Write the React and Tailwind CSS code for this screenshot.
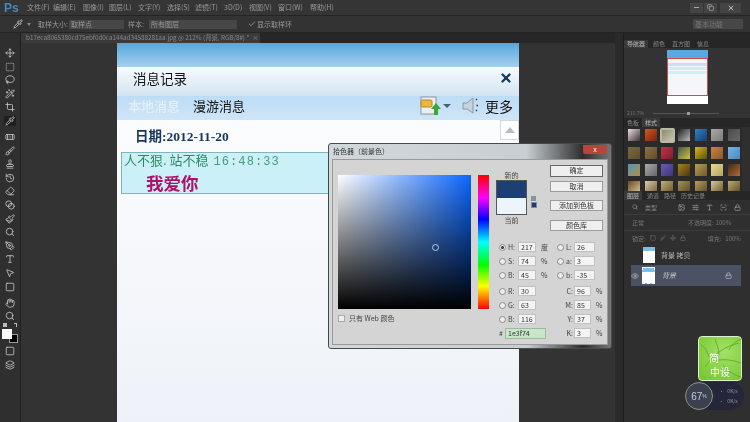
import React from "react";
import { Move, SquareDashed, Lasso, Wand2, Crop, Pipette, Bandage, Brush, Stamp, History, Eraser, Blend, Hand, Search, Type, MousePointer2, PenTool, Square, Layers, Image, Lock, Eye, Minus, Copy, X, Check, SlidersHorizontal, ScanLine, Paintbrush, Move as MoveIcon } from "lucide-react";

const CJK = { fontFamily: '"Noto Sans CJK SC","Noto Sans",sans-serif' };

const menus = ["文件(F)", "编辑(E)", "图像(I)", "图层(L)", "文字(Y)", "选择(S)", "滤镜(T)", "3D(D)", "视图(V)", "窗口(W)", "帮助(H)"];
const menuGaps = ["w-[26px]", "w-[30px]", "w-[26px]", "w-[29px]", "w-[29px]", "w-[28px]", "w-[29px]", "w-[25px]", "w-[29px]", "w-[32px]", "w-[32px]"];

const tools = [
  [Move, "mt-[0px]"], [SquareDashed, "mt-[3.6px]"], [Lasso, "mt-[3.6px]"], [Wand2, "mt-[3.6px]"], [Crop, "mt-[3.6px]"], [Pipette, "mt-[3.6px]"],
  [Bandage, "mt-[6px]"], [Brush, "mt-[3.6px]"], [Stamp, "mt-[3.6px]"], [History, "mt-[3.6px]"], [Eraser, "mt-[3.6px]"], [Blend, "mt-[3.6px]"],
  [Paintbrush, "mt-[3.6px]"], [Search, "mt-[3.6px]"], [PenTool, "mt-[3.6px]"], [Type, "mt-[3.6px]"], [MousePointer2, "mt-[3.6px]"], [Square, "mt-[3.6px]"],
  [Hand, "mt-[6px]"], [Search, "mt-[3px]"],
];

const styles = [
  ["#e8e0e0", "#40303a"], ["#d9541c", "#6b2a10"], ["#8a8a72", "#c9c9b0"], ["#222", "#bbb"], ["#2f80c8", "#16406d"], ["#a7a7a7", "#7d7d7d"], ["#4a4a4a", "#6a6a6a"],
  ["#7b6a3c", "#5e5030"], ["#8d7340", "#5e4d2c"], ["#c5334c", "#7d1c2c"], ["#3d5a4a", "#d8c040"], ["#d4b818", "#5e500c"], ["#c78544", "#8a5730"], ["#76b4e4", "#4d88bd"],
  ["#5a90c0", "#b09040"], ["#aaa", "#666"], ["#6a5cb4", "#3e3478"], ["#a9821f", "#4a3610"], ["#b99c58", "#705a28"], ["#e8d898", "#b8a260"], ["#3a2c1c", "#b86a30"],
  ["#6a4a22", "#d8c498"], ["#d8ceb0", "#7a5e30"], ["#c0ae80", "#6a5428"], ["#a8925a", "#5a4820"], ["#b89e60", "#5a4820"], ["#d8c8a0", "#6a5428"], ["#c0ae70", "#5a4820"],
];

function Swatch({ a, b, idx }) {
  return (
    <div className={idx === 2 ? "w-[15px] h-[15px] rounded-[2px] border-2 border-[#b9b9a4]" : "w-[12px] h-[12px] mx-[1px] my-[1px]"} style={{ background: `linear-gradient(135deg, ${a}, ${b})` }} />
  );
}

function Radio({ on }) {
  return <span className="w-[7px] h-[7px] rounded-full bg-[#eeeeee] border border-[#8a8a8a] flex items-center justify-center shrink-0">{on && <span className="w-[3px] h-[3px] rounded-full bg-[#333]" />}</span>;
}

function Field({ radio, on, label, value, w, unit, labelW }) {
  return (
    <div className="flex items-center">
      {radio && <Radio on={on} />}
      <span className={`${labelW} text-[7px] text-[#444] ml-[2px]`}>{label}</span>
      <span className={`${w} h-[10px] bg-[#f4f4f4] border border-[#c0c0c0] text-[7px] leading-[8px] pl-[2px] text-[#333]`}>{value}</span>
      {unit && <span className="ml-[5px] text-[7px] text-[#444]">{unit}</span>}
    </div>
  );
}

function Btn({ children, cls }) {
  return <div className={`w-[53px] h-[11px] bg-[#efefef] border border-[#9c9c9c] text-[7px] leading-[9px] text-center text-[#333] ${cls}`}>{children}</div>;
}

function Dialog() {
  const rows = [
    [{ radio: true, on: true, label: "H:", value: "217", unit: "度" }, { radio: true, label: "L:", value: "26" }],
    [{ radio: true, label: "S:", value: "74", unit: "%" }, { radio: true, label: "a:", value: "3" }],
    [{ radio: true, label: "B:", value: "45", unit: "%" }, { radio: true, label: "b:", value: "-35" }],
    [{ radio: true, label: "R:", value: "30" }, { label: "C:", value: "96", unit: "%" }],
    [{ radio: true, label: "G:", value: "63" }, { label: "M:", value: "85", unit: "%" }],
    [{ radio: true, label: "B:", value: "116" }, { label: "Y:", value: "37", unit: "%" }],
  ];
  return (
    <div className="absolute left-[328px] top-[143px] w-[284px] h-[206px] rounded-[3px] border border-[#4a4a4a] bg-[linear-gradient(90deg,#d0d8dc_0%,#c6cfd2_70%,#2e2e2e_90%,#777_100%)] px-[3px] pb-[3px] flex flex-col" style={CJK}>
      <div className="h-[15px] flex items-center justify-between shrink-0">
        <span className="text-[7px] text-[#333] ml-[1px]">拾色器（前景色）</span>
        <span className="w-[24px] h-[9px] bg-[#b8443c] rounded-b-[2px] text-white text-[7px] leading-[9px] text-center mr-[1px] -mt-[5px]">x</span>
      </div>
      <div className="flex-1 bg-[#d4d4d4] border border-[#9a9a9a] flex">
        <div className="ml-[5px] mt-[15px] w-[151px] shrink-0">
          <div className="flex gap-[7px]">
            <div className="w-[133px] h-[134px] bg-[linear-gradient(to_top,#000,transparent),linear-gradient(to_right,#fff,#0a66ff)] relative">
              <span className="absolute left-[94px] top-[69px] w-[7px] h-[7px] rounded-full border border-[#b8cbe2]" />
            </div>
            <div className="w-[11px] h-[134px] bg-[linear-gradient(to_bottom,#ff0000,#ff00ff_17%,#0000ff_33%,#00ffff_50%,#00ff00_67%,#ffff00_83%,#ff0000)]" />
          </div>
          <div className="flex items-center mt-[4px] text-[7px] text-[#444]">
            <span className="w-[7px] h-[7px] bg-[#eee] border border-[#aaa] mr-[4px]" />只有 Web 颜色
          </div>
        </div>
        <div className="ml-[7px] flex-1 flex flex-col">
          <div className="flex h-[80px] shrink-0">
            <div className="w-[31px] mt-[11px] shrink-0 text-center text-[7px] text-[#444] leading-[9px]">
              <div>新的</div>
              <div className="h-[35px] border border-[#555] flex flex-col">
                <div className="flex-1 bg-[#1e3f74]" />
                <div className="flex-1 bg-[#eef4fb]" />
              </div>
              <div className="mt-[1px]">当前</div>
            </div>
            <div className="w-[7px] ml-[4px] mt-[36px] flex flex-col gap-[1px] shrink-0">
              <span className="w-[5px] h-[5px] bg-[#8a93a0]" />
              <span className="w-[6px] h-[6px] bg-[#1e3f74] border border-[#889]" />
            </div>
            <div className="ml-[12px] mt-[5px] flex flex-col shrink-0">
              <Btn cls="h-[12px] border-[#666]">确定</Btn>
              <Btn cls="mt-[4px]">取消</Btn>
              <Btn cls="mt-[8px]">添加到色板</Btn>
              <Btn cls="mt-[9px]">颜色库</Btn>
            </div>
          </div>
          <div className="flex flex-col">
            {rows.map((r, i) => (
              <div key={i} className={`flex h-[14px] items-center ${i === 3 ? "mt-[2px]" : ""}`}>
                <div className="w-[58px] ml-[3px] shrink-0"><Field {...r[0]} labelW="w-[10px]" w="w-[18px]" /></div>
                <div className="shrink-0">
                  {r[1].radio ? <Field {...r[1]} labelW="w-[8px]" w="w-[21px]" /> : <Field {...r[1]} labelW="w-[15px] text-right pr-[1px]" w="w-[17px]" />}
                </div>
              </div>
            ))}
            <div className="flex h-[14px] items-center">
              <div className="w-[58px] ml-[3px] shrink-0 flex items-center text-[7px] text-[#444]">
                <span className="w-[6px]">#</span>
                <span className="w-[41px] h-[11px] bg-[#c8e6c9] border border-[#a0b8a0] pl-[2px] leading-[9px] text-[#333]">1e3f74</span>
              </div>
              <Field label="K:" value="3" unit="%" labelW="w-[15px] text-right pr-[1px]" w="w-[17px]" />
            </div>
          </div>
        </div>
      </div>
    </div>
  );
}

function Doc() {
  return (
    <div className="ml-[96px] w-[402px] h-full bg-[linear-gradient(to_bottom,#ffffff,#eef2f8)] flex flex-col" style={CJK}>
      <div className="h-[24px] shrink-0 bg-[linear-gradient(to_bottom,#56a6de,#a6d0ee)]" />
      <div className="h-px bg-white shrink-0" />
      <div className="h-[28px] shrink-0 bg-[linear-gradient(to_bottom,#f6fafd,#d2e4f3)] flex items-center justify-between pl-[16px] pr-[6px] pb-[8px]">
        <span className="text-[13.5px] leading-[18px] text-[#111]">消息记录</span>
        <X size={14} strokeWidth={4} className="text-[#123a63]" />
      </div>
      <div className="h-[24px] shrink-0 bg-[linear-gradient(to_bottom,#bcdcf6,#cfe5f7)] flex items-center pl-[11px] pr-[6px] pb-[5px]">
        <span className="text-[13px] leading-[18px] text-[#e4f0fa] font-medium">本地消息</span>
        <span className="ml-[13px] text-[13px] leading-[18px] text-[#111]">漫游消息</span>
        <div className="ml-auto flex items-center">
          <svg width="22" height="20" viewBox="0 0 22 20">
            <rect x="1" y="1" width="15" height="17" fill="#eee" stroke="#8a94a8" />
            <rect x="1" y="4" width="11" height="7" rx="1.5" fill="#e8b93a" stroke="#b8892a" />
            <path d="M14 19v-6h-3l5-6 5 6h-3v6z" fill="#3aa838" />
          </svg>
          <span className="ml-[1px] w-0 h-0 border-x-[4px] border-x-transparent border-t-[4px] border-t-[#46607e]" />
          <svg className="ml-[11px]" width="18" height="18" viewBox="0 0 18 18">
            <path d="M1 6h4l6-5v15l-6-4H1z" fill="#c6d2dc" stroke="#8a98a4" />
            <path d="M14 3l1-1M14.5 8.5H16M14 13l1 1" stroke="#333" strokeWidth="1.4" />
          </svg>
          <span className="ml-[5px] text-[14px] leading-[18px] text-[#111]">更多</span>
        </div>
      </div>
      <div className="flex-1 relative flex flex-col min-h-0">
        <div className="absolute right-0 top-0 w-[19px] h-[20px] bg-white border border-[#d4d8dc] flex items-center justify-center">
          <span className="w-0 h-0 border-x-[5px] border-x-transparent border-b-[6px] border-b-[#b4bcc4]" />
        </div>
        <div className="h-[32px] pl-[18px] pt-[8px] shrink-0 text-[13.5px] leading-[18px] font-bold text-[#17355c]" style={{ fontFamily: '"Liberation Serif","Noto Sans CJK SC",serif' }}>日期:2012-11-20</div>
        <div className="ml-[4px] mr-[190px] h-[42px] bg-[#ccf0f8] border-y border-l border-[#7fb4b8] pl-[2px] shrink-0">
          <div className="text-[13px] leading-[15px] text-[#2e8a62] whitespace-nowrap -mt-[1px]">人不狠. 站不稳 <span className="ml-[2px] text-[12px] tracking-[1.1px] text-[#3f9f7c]" style={{ fontFamily: '"Liberation Mono",monospace' }}>16:48:33</span></div>
          <div className="ml-[22px] mt-[2px] text-[17.5px] leading-[22px] font-bold text-[#b0106a]">我爱你</div>
        </div>
      </div>
    </div>
  );
}

function Panels() {
  return (
    <div className="w-[127px] shrink-0 bg-[#2f2f2f] flex flex-col border-l border-[#1e1e1e]" style={CJK}>
      <div className="h-[7px] bg-[#262626] shrink-0" />
      <div className="h-[8px] flex text-[6px] leading-[8px] text-[#888] bg-[#262626] shrink-0">
        <span className="px-[3px] bg-[#3a3a3a] text-[#bbb]">导航器</span>
        <span className="ml-[5px]">颜色</span><span className="ml-[7px]">直方图</span><span className="ml-[7px]">信息</span>
      </div>
      <div className="h-[60px] shrink-0 flex justify-center pt-[2px] bg-[#333]">
        <div className="w-[41px] h-[54px] bg-white flex flex-col">
          <div className="h-[8px] bg-[#5aa8df] shrink-0" />
          <div className="h-[38px] border border-[#c8504c] bg-[#f4f6fa]">
            <div className="h-[3px] mt-[4px] bg-[#c8e0f4]" />
            <div className="h-[3px] mt-[1px] bg-[#dfe6ee]" />
            <div className="h-[3px] mt-[1px] bg-[#ccf0f8]" />
          </div>
        </div>
      </div>
      <div className="h-[10px] flex items-center pl-[3px] gap-[9px] text-[5px] text-[#777] bg-[#333] shrink-0">
        <span>211.7%</span>
        <span className="w-[66px] h-px bg-[#555] relative"><span className="absolute left-[34px] -top-[1px] w-[3px] h-[3px] bg-[#999]" /></span>
      </div>
      <div className="h-[9px] flex text-[6px] leading-[9px] text-[#888] bg-[#262626] shrink-0">
        <span className="px-[3px]">色板</span><span className="px-[3px] bg-[#3a3a3a] text-[#bbb]">样式</span>
      </div>
      <div className="h-[64px] overflow-hidden shrink-0 pl-[2px] pt-[1px] grid grid-cols-7 gap-y-[3px] w-[118px] justify-items-center items-start bg-[#2a2a2a]">
        {styles.map((s, i) => <Swatch key={i} a={s[0]} b={s[1]} idx={i} />)}
      </div>
      <div className="h-[9px] flex text-[6px] leading-[9px] text-[#888] bg-[#262626] shrink-0 gap-[5px]">
        <span className="px-[3px] bg-[#3a3a3a] text-[#bbb]">图层</span><span>通道</span><span>路径</span><span>历史记录</span>
      </div>
      <div className="h-[15px] flex items-center pl-[8px] text-[#aaa] gap-[7px] shrink-0 border-b border-[#3c3c3c] text-[6px]">
        <Search size={6} /><span className="w-[26px] text-[#888]">类型</span>
        <Image size={7} /><SlidersHorizontal size={7} /><Type size={7} /><ScanLine size={7} /><Lock size={7} />
      </div>
      <div className="h-[16px] flex items-center pl-[8px] text-[6px] text-[#777] shrink-0 border-b border-[#3c3c3c]">
        <span className="w-[56px]">正常</span><span>不透明度:</span><span className="ml-[2px]">100%</span>
      </div>
      <div className="h-[14px] flex items-center pl-[8px] text-[6px] text-[#777] gap-[4px] shrink-0">
        <span>锁定:</span><Square size={6} /><Brush size={6} /><MoveIcon size={6} /><Lock size={6} />
        <span className="ml-[18px]">填充:</span><span>100%</span>
      </div>
      <div className="h-[20px] flex items-center pl-[19px] text-[7px] text-[#bbb] shrink-0 mr-[9px]">
        <div className="w-[12px] h-[16px] bg-[linear-gradient(to_bottom,#7fbce8_25%,#fff_25%)]" /><span className="ml-[6px]">背景 拷贝</span>
      </div>
      <div className="h-[21px] flex items-center pl-[4px] text-[7px] italic text-[#ccc] bg-[#4a5263] shrink-0 mr-[9px] ml-[7px]">
        <Eye size={8} className="-ml-[4px] text-[#bbb]" />
        <div className="ml-[3px] w-[13px] h-[17px] bg-[linear-gradient(to_bottom,#7fbce8_25%,#fff_25%)] border border-dashed border-white" /><span className="ml-[7px]">背景</span>
        <Lock size={7} className="ml-auto mr-[9px] text-[#ccc]" />
      </div>
      <div className="flex-1 flex flex-col items-end pr-[8px] pt-[50px]">
        <div className="relative overflow-hidden w-[44px] h-[45px] rounded-[4px] bg-[radial-gradient(circle_at_60%_35%,#a6e068,#71c52c)] border border-[#e0f0c8] text-white text-[10px] leading-[14px] flex flex-col justify-end items-center pb-[1px]">
          <svg className="absolute inset-0" width="44" height="45" viewBox="0 0 44 45" fill="none" stroke="#5aa81e" strokeWidth="0.8">
            <path d="M6 30C14 18 24 10 40 6M16 24C22 22 30 22 42 26M20 18C20 12 18 8 16 2M30 13C32 8 36 5 42 2M24 28C30 34 34 38 42 40M10 20C8 14 6 10 2 8" />
          </svg>
          <span className="relative -ml-[12px]">简</span><span className="relative">中设</span>
        </div>
      </div>
      <div className="absolute right-[6px] top-[349px] w-[59px] h-[28px] rounded-full bg-[#25263a] flex items-center">
        <div className="w-[28px] h-[28px] rounded-full bg-[#3a4050] border border-[#8a9a78] text-[#c8ccd4] text-[10px] flex items-center justify-center" style={{ fontFamily: '"Liberation Sans",sans-serif' }}>67<span className="text-[5px] mt-[2px]">%</span></div>
        <div className="ml-[6px] flex flex-col gap-[2px] text-[5px] text-[#999] leading-[8px]">
          <span>• &nbsp; 0K/s</span><span>• &nbsp; 0K/s</span>
        </div>
      </div>
    </div>
  );
}

export default function App() {
  return (
    <div className="relative w-[750px] h-[422px] overflow-hidden bg-[#2f2f2f] flex flex-col blur-[0.5px]" style={CJK}>
      <div className="h-[15px] bg-[#353535] flex items-center shrink-0 text-[7px] text-[#999]">
        <span className="w-[27px] pl-[4px] text-[12px] font-bold text-[#4b86b8]" style={{ fontFamily: '"Liberation Sans",sans-serif' }}>Ps</span>
        {menus.map((m, i) => <span key={m} className={`${menuGaps[i]} shrink-0 whitespace-nowrap`}>{m}</span>)}
        <div className="ml-auto flex items-center pr-[9px] text-[#bbb]">
          <span className="w-[13px] h-[10px] bg-[#444] flex items-center justify-center"><Minus size={7} strokeWidth={3} /></span>
          <span className="w-[13px] h-[10px] bg-[#444] flex items-center justify-center ml-px"><Copy size={7} /></span>
          <span className="w-[21px] h-[10px] bg-[#444] flex items-center justify-center ml-[3px]"><X size={8} strokeWidth={3} /></span>
        </div>
      </div>
      <div className="h-[18px] bg-[#333333] border-y border-[#242424] flex items-center shrink-0 text-[7px] text-[#999]">
        <Pipette size={10} className="ml-[13px] text-[#ccc]" />
        <span className="ml-[4px] mr-[7px] w-0 h-0 border-x-[2px] border-x-transparent border-t-[3px] border-t-[#888]" />
        <span>取样大小:</span>
        <span className="ml-[1px] w-[55px] h-[9px] leading-[9px] bg-[#474747] pl-[2px]">取样点</span>
        <span className="ml-[4px]">样本:</span>
        <span className="ml-[5px] w-[88px] h-[9px] leading-[9px] bg-[#474747] pl-[2px]">所有图层</span>
        <Check size={8} className="ml-[11px] text-[#bbb]" />
        <span className="ml-[1px]">显示取样环</span>
        <span className="ml-auto mr-[7px] w-[50px] h-[10px] leading-[10px] bg-[#474747] pl-[2px] text-[#777]">基本功能</span>
      </div>
      <div className="flex-1 flex min-h-0 relative">
        <div className="w-[21px] shrink-0 bg-[#2f2f2f] border-r border-[#1f1f1f] flex flex-col items-center pt-[15px] text-[#c4c4c4]">
          {tools.map(([I, m], i) => (
            <div key={i} className={`${m} w-[12px] h-[10px] flex items-center justify-center ${i === 5 ? "bg-[#1f1f1f]" : ""}`}><I size={10} /></div>
          ))}
          <div className="w-[14px] h-[5px] mt-[2px] flex justify-between">
            <span className="w-[4px] h-[4px] bg-[#bbb]" />
            <span className="w-[3px] h-[4px] border-t border-r border-[#bbb]" />
          </div>
          <div className="relative w-[16px] h-[14px] mt-px">
            <span className="absolute right-0 bottom-0 w-[9px] h-[9px] bg-black border border-[#999]" />
            <span className="absolute left-0 top-0 w-[10px] h-[10px] bg-white" />
          </div>
          <Square size={10} className="mt-[3px]" />
          <Layers size={10} className="mt-[4px]" />
        </div>
        <div className="w-[594px] shrink-0 flex flex-col min-w-0 bg-[#333333]">
          <div className="h-[10px] shrink-0 bg-[#262626] flex">
            <div className="w-[239px] bg-[#3a3a3a] text-[6.3px] leading-[10px] text-[#888] whitespace-nowrap pl-[5px] overflow-hidden">b17eca8065380cd75ebf0d0ca144ad34588281aa.jpg @ 212% (背景, RGB/8#) * &nbsp;×</div>
          </div>
          <div className="flex-1 min-h-0"><Doc /></div>
        </div>
        <div className="w-[8px] shrink-0 bg-[#2a2a2a]" />
        <Panels />
      </div>
      <Dialog />
    </div>
  );
}
